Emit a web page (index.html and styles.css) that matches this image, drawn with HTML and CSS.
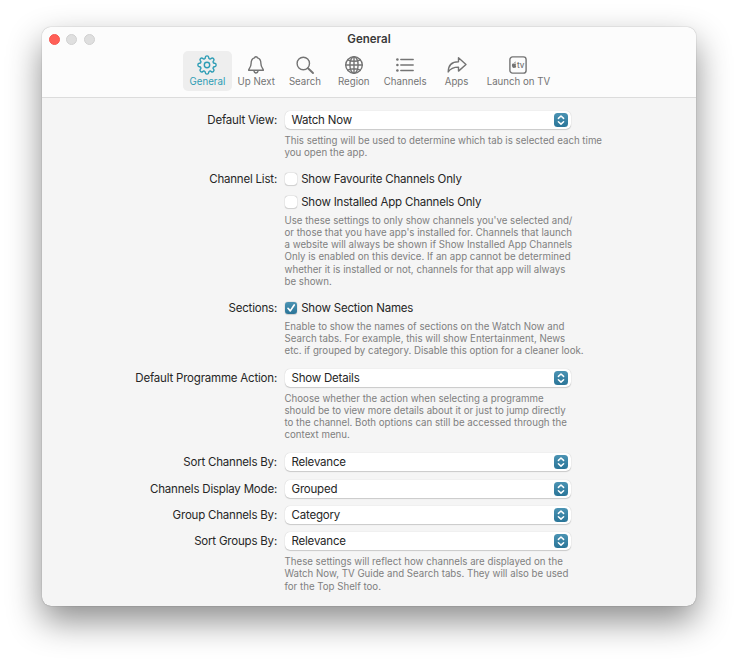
FILE: index.html
```html
<!DOCTYPE html>
<html lang="en">
<head>
<meta charset="utf-8">
<title>General</title>
<link rel="stylesheet" href="styles.css">
</head>
<body>
<svg width="0" height="0" class="defs">
  <symbol id="updown" viewBox="0 0 14 14"><path d="M4.4 5.4 7 3l2.6 2.4M4.4 8.7 7 11.1l2.6-2.4" fill="none" stroke="#fff" stroke-width="1.5" stroke-linecap="round" stroke-linejoin="round"/></symbol>
</svg>
<main class="window">
  <header class="header">
    <div class="titlebar">
      <div class="lights"><i class="light close"></i><i class="light"></i><i class="light"></i></div>
      <h1>General</h1>
    </div>
    <nav class="tabs">
      <a class="tab active"><svg viewBox="0 0 20 20"><path d="M8.28 2.28 A 1.75 1.75 0 0 1 11.72 2.28 A 1.4 1.4 0 0 0 14.24 3.33 A 1.75 1.75 0 0 1 16.67 5.76 A 1.4 1.4 0 0 0 17.72 8.28 A 1.75 1.75 0 0 1 17.72 11.72 A 1.4 1.4 0 0 0 16.67 14.24 A 1.75 1.75 0 0 1 14.24 16.67 A 1.4 1.4 0 0 0 11.72 17.72 A 1.75 1.75 0 0 1 8.28 17.72 A 1.4 1.4 0 0 0 5.76 16.67 A 1.75 1.75 0 0 1 3.33 14.24 A 1.4 1.4 0 0 0 2.28 11.72 A 1.75 1.75 0 0 1 2.28 8.28 A 1.4 1.4 0 0 0 3.33 5.76 A 1.75 1.75 0 0 1 5.76 3.33 A 1.4 1.4 0 0 0 8.28 2.28Z"/><circle cx="10" cy="10" r="2.7"/></svg><span>General</span></a>
      <a class="tab"><svg viewBox="0 0 20 20"><path d="M2.6 15.2h14.8c0-1.8-2.5-2.5-2.5-6.7C14.9 5.2 13.3 3.4 11.5 2.9 11.3 1.3 8.7 1.3 8.5 2.9 6.7 3.4 5.1 5.2 5.1 8.5c0 4.2-2.5 4.9-2.5 6.7ZM8 16.2c.3 2.3 3.7 2.3 4 0"/></svg><span>Up Next</span></a>
      <a class="tab"><svg viewBox="0 0 20 20"><circle cx="8.3" cy="8.5" r="6.2"/><path class="handle" d="m13 13.2 5 4.8"/></svg><span>Search</span></a>
      <a class="tab"><svg viewBox="0 0 20 20"><circle cx="10" cy="10" r="8.3"/><ellipse cx="10" cy="10" rx="4.1" ry="8.3"/><path d="M10 1.7v16.6M1.7 10h16.6M3.8 4.8c3.3 2 9.1 2 12.4 0M3.8 15.2c3.3-2 9.1-2 12.4 0"/></svg><span>Region</span></a>
      <a class="tab channels"><svg viewBox="0 0 20 20"><path d="M5.8 4.5h12.4M5.8 10h12.4M5.8 15.5h12.4"/><g class="solid"><circle cx="2.4" cy="4.5" r="1.3"/><circle cx="2.4" cy="10" r="1.3"/><circle cx="2.4" cy="15.5" r="1.3"/></g></svg><span>Channels</span></a>
      <a class="tab"><svg viewBox="0 0 20 20"><path d="M11.5 2.8v3.9C4.5 6.7 1.2 10.3 1.2 17c2.3-3.7 5.1-4.9 10.3-4.9v4L19 9.5 11.5 2.8Z"/></svg><span>Apps</span></a>
      <a class="tab launch"><svg viewBox="0 0 20 20"><rect x="1.9" y="1.9" width="16.2" height="16.2" rx="2.7"/><path class="apple" d="M6.3 8c.1-.9.6-1.4 1.4-1.6.1.9-.5 1.6-1.4 1.6ZM8.2 11.2c-.8-.5-.7-1.7.1-2.1-.5-.9-1.5-.6-2-.4-.8-.3-2.3-.3-2.4 1.3-.1 1.5.9 3 1.7 2.9.6-.2.8-.2 1.3 0 .6.1 1.1-.9 1.3-1.7Z"/><text x="8.9" y="12.8">tv</text></svg><span>Launch on TV</span></a>
    </nav>
  </header>
  <section class="form">
    <div class="row">
      <label>Default View:</label>
      <div class="field"><div class="select">Watch Now<svg><use href="#updown"/></svg></div>
      <p>This setting will be used to determine which tab is selected each time<br>you open the app.</p></div>
    </div>
    <div class="row check-row">
      <label>Channel List:</label>
      <div class="field"><div class="check"><i class="box"></i>Show Favourite Channels Only</div>
      <div class="check second"><i class="box"></i>Show Installed App Channels Only</div>
      <p class="tight">Use these settings to only show channels you've selected and/<br>or those that you have app's installed for. Channels that launch<br>a website will always be shown if Show Installed App Channels<br>Only is enabled on this device. If an app cannot be determined<br>whether it is installed or not, channels for that app will always<br>be shown.</p></div>
    </div>
    <div class="row check-row">
      <label>Sections:</label>
      <div class="field"><div class="check"><i class="box on"><svg viewBox="0 0 12 12"><path d="m3 6.3 2.3 2.6L9.2 3"/></svg></i>Show Section Names</div>
      <p class="tight">Enable to show the names of sections on the Watch Now and<br>Search tabs. For example, this will show Entertainment, News<br>etc. if grouped by category. Disable this option for a cleaner look.</p></div>
    </div>
    <div class="row">
      <label>Default Programme Action:</label>
      <div class="field"><div class="select">Show Details<svg><use href="#updown"/></svg></div>
      <p>Choose whether the action when selecting a programme<br>should be to view more details about it or just to jump directly<br>to the channel. Both options can still be accessed through the<br>context menu.</p></div>
    </div>
    <div class="row">
      <label>Sort Channels By:</label>
      <div class="field"><div class="select">Relevance<svg><use href="#updown"/></svg></div></div>
    </div>
    <div class="row close-row">
      <label>Channels Display Mode:</label>
      <div class="field"><div class="select">Grouped<svg><use href="#updown"/></svg></div></div>
    </div>
    <div class="row close-row">
      <label>Group Channels By:</label>
      <div class="field"><div class="select">Category<svg><use href="#updown"/></svg></div></div>
    </div>
    <div class="row close-row">
      <label>Sort Groups By:</label>
      <div class="field"><div class="select">Relevance<svg><use href="#updown"/></svg></div>
      <p>These settings will reflect how channels are displayed on the<br>Watch Now, TV Guide and Search tabs. They will also be used<br>for the Top Shelf too.</p></div>
    </div>
  </section>
</main>
</body>
</html>
```
FILE: styles.css
```css
* { box-sizing: border-box; }
body {
  margin: 0;
  padding: 27px 42px 0;
  height: 665px;
  overflow: hidden;
  background: #fff;
  font-family: Inter, "Liberation Sans", sans-serif;
  font-size: 11.5px;
  color: #262626;
}
.defs { display: none; }
.window {
  width: 654px;
  height: 579px;
  border-radius: 9px;
  background: #f5f5f5;
  overflow: hidden;
  box-shadow: 0 0 1px rgba(0,0,0,.5), 0 15px 34px rgba(0,0,0,.45);
}
.header {
  height: 71px;
  background: #fcfcfc;
  border-bottom: 1px solid #dcdcdc;
}
.titlebar {
  display: grid;
  grid-template-columns: 100px 1fr 100px;
  align-items: center;
  height: 24px;
}
.lights { display: flex; gap: 6.5px; padding-left: 6.5px; }
.light {
  width: 11px;
  height: 11px;
  border-radius: 50%;
  background: #dfdfdf;
  border: .5px solid #d0d0d0;
}
.light.close { background: #ff5f57; border-color: #f6574f; }
h1 { margin: 0; font-size: 11.5px; font-weight: 600; text-align: center; color: #3a3a3a; }
.tabs { display: flex; padding-left: 141px; }
.tab {
  width: 48.8px;
  height: 40px;
  padding-top: 4px;
  border-radius: 5px;
  display: flex;
  flex-direction: column;
  align-items: center;
  font-size: 9.7px;
  line-height: 12px;
  color: #747474;
  white-space: nowrap;
}
.tab.active { background: #eee; color: #2e9db5; }
.tab svg {
  width: 20px;
  height: 20px;
  margin-bottom: 1px;
  fill: none;
  stroke: currentColor;
  stroke-width: 1.4;
  stroke-linejoin: round;
  stroke-linecap: round;
}
.tab .solid, .tab .apple { fill: currentColor; stroke: none; }
.tab .handle { stroke-width: 1.9; }
.tab text { font-size: 8px; font-weight: 500; fill: currentColor; stroke: none; }
.tab.channels { width: 54px; }
.tab.launch { width: 75px; }
.form { padding-top: 13.4px; }
.row {
  display: grid;
  grid-template-columns: 235px 320px;
  column-gap: 7.5px;
  margin-bottom: 11.6px;
}
.row:has(+ .close-row) { margin-bottom: 8.4px; }
.row:has(+ .check-row) { margin-bottom: 10.8px; }
label { text-align: right; line-height: 18px; white-space: nowrap; }
label, .select, .check { letter-spacing: -.2px; }
.select {
  display: flex;
  align-items: center;
  justify-content: space-between;
  width: 286px;
  height: 18px;
  padding: 0 2.3px 0 7px;
  border-radius: 5px;
  background: #fff;
  box-shadow: 0 0 1px rgba(0,0,0,.22), 0 1px 1px rgba(0,0,0,.16);
}
.select svg {
  width: 14px;
  height: 14px;
  border-radius: 3.5px;
  background: linear-gradient(#4b93b3, #2a7598);
}
.check { display: flex; align-items: center; height: 18px; }
.check.second { margin-top: 4.5px; }
.box {
  display: flex;
  width: 12px;
  height: 12px;
  margin-right: 4.7px;
  border-radius: 3px;
  background: #fff;
  box-shadow: 0 0 1px rgba(0,0,0,.4), 0 .5px 1px rgba(0,0,0,.12);
}
.box.on { background: linear-gradient(#4b93b3, #2a7598); }
.box svg { width: 12px; height: 12px; fill: none; stroke: #fff; stroke-width: 1.7; stroke-linecap: round; stroke-linejoin: round; }
p {
  margin: 5.7px 0 0;
  font-size: 9.7px;
  line-height: 12.2px;
  color: #808080;
  white-space: nowrap;
}
p.tight { margin-top: 4.1px; }
```
